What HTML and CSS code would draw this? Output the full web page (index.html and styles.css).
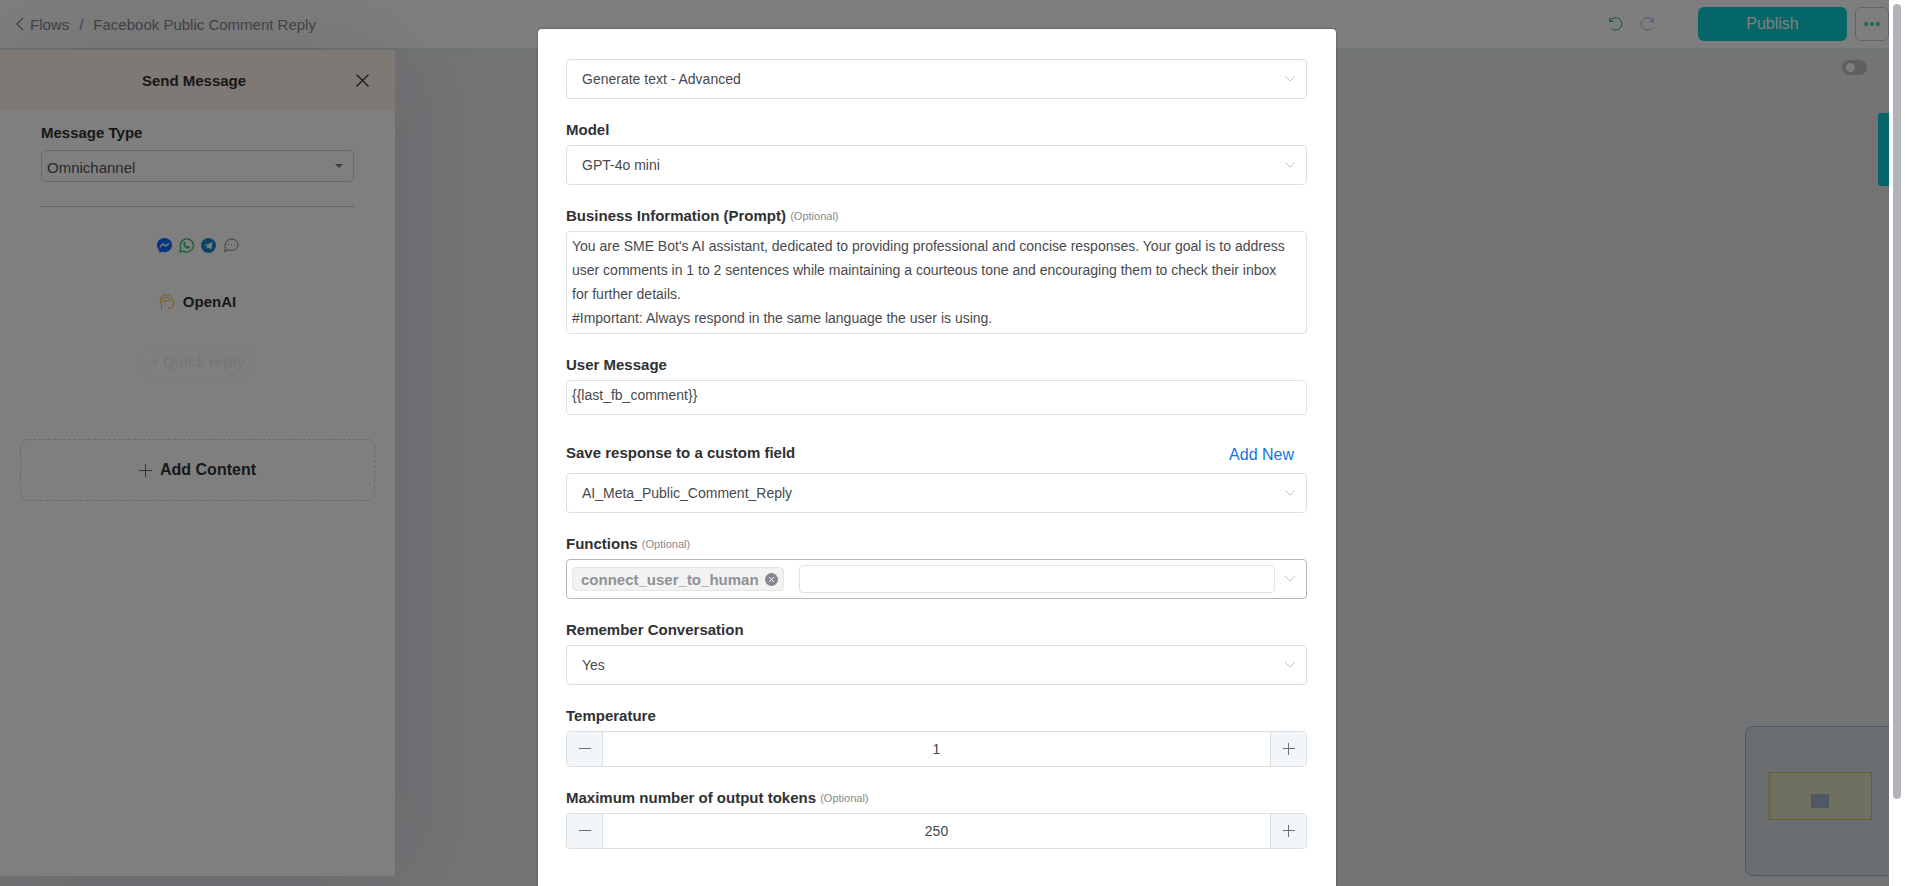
FILE: index.html
```html
<!DOCTYPE html>
<html lang="en">
<head>
<meta charset="utf-8">
<title>Facebook Public Comment Reply</title>
<link rel="stylesheet" href="styles.css">
</head>
<body>
<div class="viewport">
  <div class="stage">
    <header class="topbar">
      <nav class="crumbs">
        <a class="crumb-back" href="#"><svg width="8" height="14" viewBox="0 0 8 14"><path d="M7 1 1 7l6 6" fill="none" stroke="currentColor" stroke-width="1.3"/></svg>Flows</a>
        <span>/</span>
        <span>Facebook Public Comment Reply</span>
      </nav>
      <div class="history">
        <button class="icon-btn undo" aria-label="Undo"><svg width="14" height="14" viewBox="0 0 14 14" fill="none" stroke="currentColor"><path d="M.7.7v3.8h3.8M1 4.2a6.2 6.2 0 1 1 1.6 7.4"/></svg></button>
        <button class="icon-btn redo" aria-label="Redo"><svg width="14" height="14" viewBox="0 0 14 14" fill="none" stroke="currentColor"><path d="M13.3.7v3.8H9.5M13 4.2a6.2 6.2 0 1 0-1.6 7.4"/></svg></button>
      </div>
      <button class="publish">Publish</button>
      <button class="more" aria-label="More"><svg width="16" height="6" viewBox="0 0 16 6" fill="none" stroke="currentColor" stroke-width="1.2"><circle cx="2.2" cy="3" r="1.4"/><circle cx="8" cy="3" r="1.4"/><circle cx="13.8" cy="3" r="1.4"/></svg></button>
    </header>
    <main class="workspace">
      <aside class="panel">
        <div class="panel-head">
          <h2 class="panel-title">Send Message</h2>
          <button class="icon-btn close" aria-label="Close"><svg width="13" height="13" viewBox="0 0 13 13" stroke="currentColor" stroke-width="1.3"><path d="M.5.5l12 12M12.500.5l-12 12"/></svg></button>
        </div>
        <div class="panel-body">
          <label class="panel-label" for="type">Message Type</label>
          <div class="type-wrap">
            <select class="type-select" id="type"><option>Omnichannel</option></select>
            <svg class="caret" width="8" height="4" viewBox="0 0 8 4"><path d="M0 0h8L4 4z" fill="currentColor"/></svg>
          </div>
          <hr class="rule">
          <div class="channels">
            <svg width="15" height="15" viewBox="0 0 24 24"><path fill="#0a6cff" d="M12 0C5.300 0 0 4.900 0 11.600c0 3.500 1.400 6.500 3.800 8.600V24l3.700-2c1.400.4 2.900.6 4.500.6 6.700 0 12-4.800 12-11.300S18.700 0 12 0z"/><path fill="none" stroke="#fff" stroke-width="2.400" d="m5 14.500 4.500-5 4.500 3.500 5-4.500"/></svg>
            <svg width="15" height="15" viewBox="0 0 24 24"><path fill="none" stroke="#20c068" stroke-width="2" d="m1.500 22.500 1.600-5.800a10.500 10.500 0 1 1 4 4.300z"/><path fill="#20c068" d="M8.300 6.500c.6-.4 1.200-.2 1.500.5l.8 1.900-1 1.500c.8 1.700 2 2.800 3.900 3.700l1.400-1.300 2.500 1.300c.3 2-1.200 3.200-2.900 3.200-3.300-.4-7.400-4.400-7.500-7.800 0-1.200.5-2.300 1.300-3z"/></svg>
            <svg width="15" height="15" viewBox="0 0 24 24"><circle cx="12" cy="12" r="12" fill="#1288c8"/><path fill="#fff" d="m4.500 12 14-5.700-2.300 12-4.200-3-2.200 2-.5-4.200 6-4.800-7.500 4.500z"/></svg>
            <svg width="16" height="15" viewBox="0 0 16 15" fill="none" stroke="#77797d"><path d="M8.500 1C12 1 15 3.500 15 6.800s-3 5.700-6.500 5.700c-1.300 0-2.300-.2-3.300-.8L1.500 13.800 2.500 10.300C1 6 3.500 1 8.500 1z"/><path d="M5 6.700h1M8 6.700h1M11 6.700h1"/></svg>
          </div>
          <div class="openai">
            <svg width="16" height="16" viewBox="0 0 16 16" fill="none" stroke="#f0b040"><path d="M2.500 15.500V11C-1 5 3 .7 7.500.7c4.200 0 6.300 2.800 6 5.800l1.800 3-1.500.6v2.600c0 .8-.6 1.100-1.300 1.100H9.500v1.700"/><path d="M3.500 8C2.500 4.500 5 3 7 3.600c2.500-1 4.500 1 3.700 2.800-.7 1.500-2.400 1.300-2.700.1M4.800 8.200c1.800.3 2.700-.8 2.200-2.200"/></svg>
            <span>OpenAI</span>
          </div>
          <button class="quick">+ Quick reply</button>
        </div>
        <button class="add-content"><svg width="13" height="13" viewBox="0 0 13 13" stroke="#666"><path d="M6.500 0v13M0 6.500h13"/></svg>Add Content</button>
      </aside>
      <label class="toggle"><input type="checkbox" aria-label="Toggle view"></label>
      <div class="side-tab"></div>
      <svg class="minimap" width="144" height="150" viewBox="0 0 144 150"><path d="M144 .5H8A7.500 7.500 0 0 0 .5 8v134a7.500 7.500 0 0 0 7.500 7.500h136" fill="#d6dce0" stroke="#a3afd8"/><rect x="24" y="46.500" width="102.500" height="47" fill="#dfe0c0" stroke="#d9c04a"/><rect x="66" y="68" width="18" height="14" fill="#a0b0cc"/></svg>
    </main>
    <div class="overlay">
      <form class="modal">
        <div class="field">
          <div class="select-wrap"><select class="select" aria-label="Action"><option>Generate text - Advanced</option></select><svg class="chev" width="12" height="8" viewBox="0 0 12 8"><path d="m1 1 5 5 5-5"/></svg></div>
        </div>
        <div class="field">
          <label class="label" for="model">Model</label>
          <div class="select-wrap"><select class="select" id="model"><option>GPT-4o mini</option></select><svg class="chev" width="12" height="8" viewBox="0 0 12 8"><path d="m1 1 5 5 5-5"/></svg></div>
        </div>
        <div class="field">
          <label class="label" for="prompt">Business Information (Prompt) <small class="opt">(Optional)</small></label>
          <textarea class="text prompt" id="prompt">You are SME Bot's AI assistant, dedicated to providing professional and concise responses. Your goal is to address user comments in 1 to 2 sentences while maintaining a courteous tone and encouraging them to check their inbox for further details.
#Important: Always respond in the same language the user is using.</textarea>
        </div>
        <div class="field">
          <label class="label" for="message">User Message</label>
          <textarea class="text message" id="message">{{last_fb_comment}}</textarea>
        </div>
        <div class="field">
          <div class="label-row"><label class="label" for="save">Save response to a custom field</label><a class="add-new" href="#">Add New</a></div>
          <div class="select-wrap"><select class="select" id="save"><option>AI_Meta_Public_Comment_Reply</option></select><svg class="chev" width="12" height="8" viewBox="0 0 12 8"><path d="m1 1 5 5 5-5"/></svg></div>
        </div>
        <div class="field">
          <label class="label" for="functions">Functions <small class="opt">(Optional)</small></label>
          <div class="select-wrap tags">
            <span class="tag">connect_user_to_human<button type="button" class="icon-btn" aria-label="Remove"><svg width="13" height="13" viewBox="0 0 13 13"><circle cx="6.500" cy="6.500" r="6.500" fill="#85888e"/><path d="m4 4 5 5M9 4 4 9" stroke="#f2f2f2"/></svg></button></span>
            <input class="tag-input" id="functions" type="text">
            <svg class="chev" width="12" height="8" viewBox="0 0 12 8"><path d="m1 1 5 5 5-5"/></svg>
          </div>
        </div>
        <div class="field">
          <label class="label" for="remember">Remember Conversation</label>
          <div class="select-wrap"><select class="select" id="remember"><option>Yes</option></select><svg class="chev" width="12" height="8" viewBox="0 0 12 8"><path d="m1 1 5 5 5-5"/></svg></div>
        </div>
        <div class="field">
          <label class="label" for="temp">Temperature</label>
          <div class="stepper">
            <button type="button" class="step" aria-label="Decrease"><svg width="12" height="12" viewBox="0 0 12 12"><path d="M0 5.500h12"/></svg></button>
            <input class="number" id="temp" type="text" value="1">
            <button type="button" class="step plus" aria-label="Increase"><svg width="12" height="12" viewBox="0 0 12 12"><path d="M0 5.500h12M5.500 0v12"/></svg></button>
          </div>
        </div>
        <div class="field">
          <label class="label" for="tokens">Maximum number of output tokens <small class="opt">(Optional)</small></label>
          <div class="stepper">
            <button type="button" class="step" aria-label="Decrease"><svg width="12" height="12" viewBox="0 0 12 12"><path d="M0 5.500h12"/></svg></button>
            <input class="number" id="tokens" type="text" value="250">
            <button type="button" class="step plus" aria-label="Increase"><svg width="12" height="12" viewBox="0 0 12 12"><path d="M0 5.500h12M5.500 0v12"/></svg></button>
          </div>
        </div>
      </form>
    </div>
  </div>
  <div class="scrollbar"><div class="thumb"></div></div>
</div>
</body>
</html>
```
FILE: styles.css
```css
* { box-sizing: border-box; }
body { margin: 0; overflow: hidden; font-family: "Liberation Sans", Arial, sans-serif; font-size: 15px; color: #303133; }
button, input, select, textarea { font: inherit; color: inherit; margin: 0; }
button { padding: 0; cursor: pointer; }
svg { display: block; flex: none; }

.viewport { display: flex; height: 100vh; }
.stage { position: relative; flex: 1; min-width: 0; display: flex; flex-direction: column; overflow: hidden; background: #e6e8eb; }
.scrollbar { width: 16px; padding: 4px; background: #fff; }
.thumb { height: 90.5%; border-radius: 4px; background: #b1b3b9; }

.topbar { display: flex; align-items: center; height: 50px; padding-left: 16px; background: #fdfdfd; border-bottom: 2px solid #e0e8ea; }
.crumbs { flex: 1; display: flex; gap: 10px; color: #85878c; }
.crumb-back { display: flex; align-items: center; gap: 6px; color: inherit; text-decoration: none; }
.icon-btn { display: block; border: 0; background: none; }
.history { display: flex; gap: 17px; margin-right: 44px; }
.undo { color: #12a0a4; }
.redo { color: #c094e0; }
.publish { width: 149px; height: 34px; border: 0; border-radius: 6px; background: #09ccd0; color: #fff; font-size: 16px; }
.more { display: grid; place-items: center; width: 34px; height: 34px; margin-left: 8px; border: 1px solid #c8cad6; border-radius: 6px; background: none; color: #12b4b0; }

.workspace { position: relative; flex: 1; padding-bottom: 10px; display: flex; }
.panel { width: 395px; background: #fff; box-shadow: 0 0 100px rgba(0, 0, 60, .12); }
.panel-head { display: flex; align-items: center; height: 60px; padding: 0 26px; background: #fff2ea; }
.panel-title { flex: 1; margin: 0; padding-left: 6px; font-size: 15px; text-align: center; }
.panel-body { display: flex; flex-direction: column; padding: 13px 41px 0; }
.panel-label { line-height: 20px; font-weight: bold; }
.type-wrap { position: relative; margin-top: 7px; }
.type-select { display: block; width: 100%; height: 32px; padding: 3px 5px 0; appearance: none; border: 1px solid #d0d3d9; border-radius: 4px; background: none; color: #505256; }
.caret { position: absolute; right: 11px; top: 14px; color: #777; }
.rule { width: 100%; margin: 24px 0 31px; border: 0; border-top: 1px solid #c4c6ca; }
.channels { display: flex; justify-content: center; gap: 7px; }
.openai { display: flex; align-items: center; justify-content: center; gap: 8px; margin-top: 39px; line-height: 20px; font-weight: bold; }
.quick { align-self: center; height: 35px; margin: 32px 0 60px; padding: 0 10px; border: 1px dashed #f0f2f4; border-radius: 18px; background: none; color: #eceef0; font-weight: bold; }
.add-content { display: flex; align-items: center; justify-content: center; gap: 8px; width: calc(100% - 40px); height: 62px; margin: 0 20px; border: 1px dashed #cdd2e0; border-radius: 8px; background: none; font-size: 16px; font-weight: bold; }

.toggle { position: absolute; top: 10px; right: 22px; }
.toggle input { display: flex; align-items: center; width: 25px; height: 15px; margin: 0; padding: 0 4px; appearance: none; border-radius: 8px; background: #bfbfbf; }
.toggle input::before { content: ""; width: 9px; height: 9px; border-radius: 50%; background: #fff; }
.side-tab { position: absolute; top: 63px; right: 0; width: 11px; height: 73px; border-radius: 3px 0 0 3px; background: #09ccd0; }
.minimap { position: absolute; right: 0; bottom: 10px; }

.overlay { position: absolute; inset: 0; display: flex; justify-content: center; padding: 29px 15px 0 0; background: rgba(0, 0, 0, .5); }
.modal { display: flex; flex-direction: column; gap: 21px; width: 798px; padding: 30px 29px 30px 28px; border-radius: 4px 4px 0 0; background: #fff; box-shadow: 0 0 2px rgba(0, 0, 0, .5); }
.field { display: flex; flex-direction: column; }
.label { margin-bottom: 5px; line-height: 20px; font-weight: bold; }
.opt { font-size: 11px; font-weight: normal; color: #85898f; vertical-align: 1px; }
.select-wrap { position: relative; }
.select { display: block; width: 100%; height: 40px; padding: 0 15px; appearance: none; border: 1px solid #dcdfe2; border-radius: 4px; background: #fff; font-size: 14px; color: #48494c; }
.chev { position: absolute; right: 11px; top: 16px; fill: none; stroke: #c0c4cc; pointer-events: none; }
.text { display: block; width: 100%; padding: 2px 20px 2px 5px; border: 1px solid #dce2e4; border-radius: 4px; resize: none; overflow: hidden; font-size: 14px; line-height: 24px; color: #48494c; }
.prompt { height: 103px; }
.message { height: 35px; margin-bottom: 7px; }
.label-row { display: flex; justify-content: space-between; margin-bottom: 5px; }
.add-new { padding: 2px 13px 0 0; line-height: 20px; font-size: 16px; color: #1473e0; text-decoration: none; }
.tags { display: flex; align-items: center; gap: 15px; height: 40px; padding: 0 31px 0 5px; border: 1px solid #b4b6ba; border-radius: 4px; }
.tags .chev { right: 10px; top: 15px; }
.tag { display: flex; align-items: center; gap: 6px; height: 24px; padding: 0 5px 0 8px; border: 1px solid #e4e5e8; border-radius: 4px; background: #f2f2f3; font-weight: bold; color: #8e9197; }
.tag-input { flex: 1; min-width: 0; height: 28px; border: 1px solid #dfe1e4; border-radius: 4px; }
.stepper { display: flex; height: 36px; border: 1px solid #dcdfe2; border-radius: 4px; overflow: hidden; }
.step { display: grid; place-items: center; width: 36px; border: 0; border-right: 1px solid #dcdfe2; background: #f3f6f9; }
.step svg { fill: none; stroke: #6c6f74; }
.plus { border-right: 0; border-left: 1px solid #dcdfe2; }
.number { flex: 1; min-width: 0; border: 0; background: #fff; text-align: center; font-size: 14px; color: #48494c; }
```
